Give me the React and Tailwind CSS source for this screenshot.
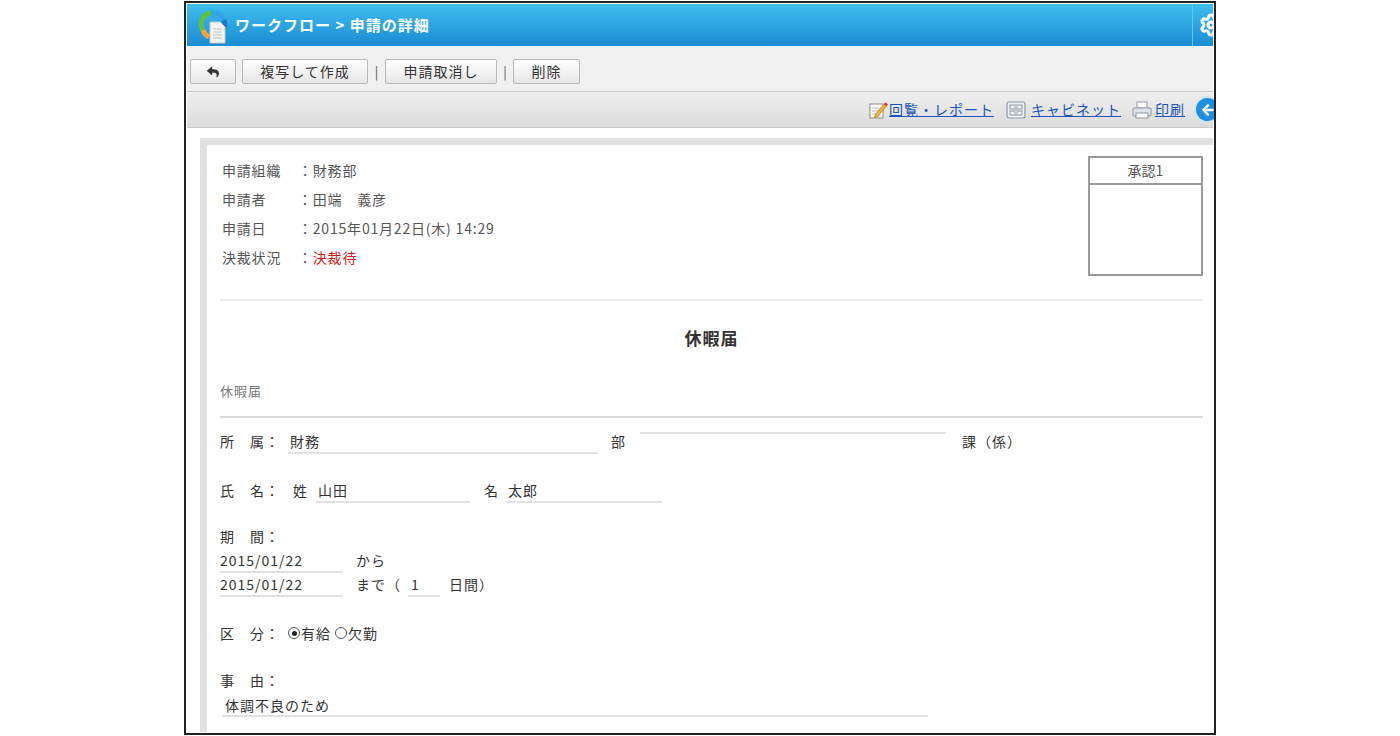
import React from 'react';
import { Settings, ArrowLeft } from 'lucide-react';
import { FaReply } from 'react-icons/fa';

const jp = { fontFamily: '"Noto Sans CJK JP", "Noto Sans", sans-serif' };

// workflow logo: colour ring with a sheet of paper in front
const Logo = () => (
  <svg width="32" height="36" viewBox="0 0 32 36">
    <path d="M6 22 A11 11 0 0 1 14 5" fill="none" stroke="#5cc23a" strokeWidth="5" />
    <path d="M14 5 A11 11 0 0 1 27 12" fill="none" stroke="#2fa6e8" strokeWidth="5" />
    <path d="M27 12 A11 11 0 0 1 27 20" fill="none" stroke="#1f78c8" strokeWidth="5" />
    <path d="M6 22 A11 11 0 0 0 12 29" fill="none" stroke="#f2a23a" strokeWidth="5" />
    <path d="M13 14 h10 l5 5 v16 h-15 z" fill="#f4f4f4" stroke="#c8c8c8" strokeWidth="1" />
    <path d="M16 21 h9 M16 24 h9 M16 27 h9 M16 30 h9" stroke="#c0c0c0" strokeWidth="1" />
  </svg>
);

const NoteIcon = () => (
  <svg width="20" height="20" viewBox="0 0 20 20">
    <rect x="2" y="4" width="13" height="14" fill="#fff" stroke="#8a8a8a" />
    <path d="M4 8 h8 M4 11 h8 M4 14 h6" stroke="#bbb" />
    <path d="M7 15 L16 4 L18.5 6 L9.5 17 L6.5 18 z" fill="#f0b030" stroke="#b07010" strokeWidth="0.6" />
    <path d="M16 4 L17.5 2.5 L20 4.5 L18.5 6 z" fill="#e03030" />
  </svg>
);

const CabinetIcon = () => (
  <svg width="22" height="20" viewBox="0 0 22 20">
    <rect x="2" y="2" width="18" height="16" rx="2" fill="#eef1f4" stroke="#8c97a3" strokeWidth="1.2" />
    <rect x="5" y="5" width="12" height="4" fill="none" stroke="#8c97a3" />
    <rect x="5" y="11" width="12" height="4" fill="none" stroke="#8c97a3" />
    <path d="M9 7 h4 M9 13 h4" stroke="#8c97a3" />
  </svg>
);

const PrintIcon = () => (
  <svg width="22" height="20" viewBox="0 0 22 20">
    <rect x="6" y="2" width="10" height="6" fill="#fff" stroke="#8c97a3" />
    <rect x="2" y="8" width="18" height="8" rx="1" fill="#dde2e8" stroke="#8c97a3" />
    <rect x="5" y="13" width="12" height="5" fill="#fff" stroke="#8c97a3" />
  </svg>
);

const ToolButton = ({ w, children }) => (
  <button
    type="button"
    className={`${w} h-[25px] flex items-center justify-center border border-[#b8b8b8] rounded-[2px] bg-gradient-to-b from-white to-[#e6e6e6] text-[14px] tracking-[1px] text-[#333]`}
  >
    {children}
  </button>
);

const Field = ({ w, children, className = '' }) => (
  <div className={`${w} border-b-2 border-[#e2e2e2] pb-[1px] leading-[20px] ${className}`}>{children}</div>
);

const Radio = ({ on }) => (
  <span className="inline-flex w-[12px] h-[12px] rounded-full border border-[#555] items-center justify-center mr-[1px]">
    {on && <span className="w-[5px] h-[5px] rounded-full bg-[#222]" />}
  </span>
);

export default function App() {
  return (
    <div className="w-[1400px] h-[736px] bg-white overflow-hidden" style={jp}>
      <div className="ml-[184px] mt-[1px] w-[1032px] h-[734px] border-2 border-[#222] p-[1px] overflow-hidden flex flex-col">
        {/* title bar */}
        <div className="h-[42px] shrink-0 flex items-center bg-gradient-to-b from-[#3fbdf0] to-[#1a8cd3]">
          <div className="ml-[10px] mt-[2px]">
            <Logo />
          </div>
          <div className="ml-[6px] text-white font-bold text-[15px] tracking-[1px]">ワークフロー &gt; 申請の詳細</div>
          <div className="ml-auto h-full flex items-center">
            <div className="w-px h-full bg-[#1878b8] border-r border-[#5fc8f2]" />
            <Settings className="ml-[6px] mr-[-10px] text-white" size={24} strokeWidth={3} />
          </div>
        </div>

        {/* action buttons */}
        <div className="h-[44px] shrink-0 mt-px bg-[#f0f0f0] flex items-start pt-[12px] pl-[3px] text-[#555]">
          <ToolButton w="w-[46px]">
            <FaReply size={12} color="#333" />
          </ToolButton>
          <div className="ml-[6px]">
            <ToolButton w="w-[126px]">複写して作成</ToolButton>
          </div>
          <span className="w-[17px] text-center leading-[25px] text-[13px]">|</span>
          <ToolButton w="w-[112px]">申請取消し</ToolButton>
          <span className="w-[16px] text-center leading-[25px] text-[13px]">|</span>
          <ToolButton w="w-[67px]">削除</ToolButton>
        </div>

        {/* link bar */}
        <div className="h-[37px] shrink-0 border-t border-b border-[#c9c9c9] bg-gradient-to-b from-[#efefef] to-[#dcdcdc] flex items-center justify-end text-[14px] tracking-[1px]">
          <NoteIcon />
          <a className="ml-[1px] text-[#1d55b8] underline">回覧・レポート</a>
          <span className="ml-[11px]">
            <CabinetIcon />
          </span>
          <a className="ml-[4px] text-[#1d55b8] underline">キャビネット</a>
          <span className="ml-[10px]">
            <PrintIcon />
          </span>
          <a className="ml-[2px] text-[#1d55b8] underline">印刷</a>
          <div className="ml-[9px] mr-[-8px] w-[27px] h-[27px] rounded-full bg-[#1e8fe0] border-2 border-[#cfe8f8] flex items-center justify-center">
            <ArrowLeft className="text-white" size={16} strokeWidth={3.5} />
          </div>
        </div>

        {/* document */}
        <div className="flex-1 min-h-0 pl-[13px] pt-[10px]">
          <div className="h-full border-l-[7px] border-t-[7px] border-[#e1e1e1] pl-[13px] pr-[10px] pt-[11px]">
            <div className="flex justify-between">
              <div className="pl-[2px] text-[14px] tracking-[0.8px] text-[#555]">
                <div className="flex h-[29px] items-center">
                  <span className="w-[76px]">申請組織</span>
                  <span>：財務部</span>
                </div>
                <div className="flex h-[29px] items-center">
                  <span className="w-[76px]">申請者</span>
                  <span>：田端　義彦</span>
                </div>
                <div className="flex h-[29px] items-center">
                  <span className="w-[76px]">申請日</span>
                  <span>：2015年01月22日(木) 14:29</span>
                </div>
                <div className="flex h-[29px] items-center">
                  <span className="w-[76px]">決裁状況</span>
                  <span>：<span className="text-[#d81818]">決裁待</span></span>
                </div>
              </div>
              <div className="w-[115px] h-[120px] border-2 border-[#9a9a9a] flex flex-col">
                <div className="h-[27px] border-b-2 border-[#9a9a9a] flex items-center justify-center text-[14px] text-[#555]">承認1</div>
              </div>
            </div>

            <div className="mt-[23px] h-[2px] bg-[#ececec]" />

            <div className="pt-[25px] text-center font-bold text-[17px] tracking-[1px] leading-[24px] text-[#333]">休暇届</div>
            <div className="mt-[31px] text-[13px] tracking-[1px] leading-[20px] text-[#777]">休暇届</div>
            <div className="mt-[15px] h-[2px] bg-[#dadada]" />

            <div className="text-[14px] tracking-[1px] text-[#333]">
              <div className="mt-[13px] flex items-start leading-[20px]">
                <span className="w-[68px]">所　属：</span>
                <Field w="w-[310px]" className="pl-[2px]">財務</Field>
                <span className="ml-[13px] w-[29px]">部</span>
                <Field w="w-[306px]" />
                <span className="ml-[16px]">課（係）</span>
              </div>

              <div className="mt-[26px] flex items-start leading-[20px]">
                <span className="w-[73px]">氏　名：</span>
                <span className="w-[23px]">姓</span>
                <Field w="w-[154px]" className="pl-[2px]">山田</Field>
                <span className="ml-[14px] w-[22px]">名</span>
                <Field w="w-[156px]" className="pl-[2px]">太郎</Field>
              </div>

              <div className="mt-[23px] leading-[20px]">期　間：</div>
              <div className="mt-[4px] flex items-start leading-[20px]">
                <Field w="w-[123px]">2015/01/22</Field>
                <span className="ml-[13px]">から</span>
              </div>
              <div className="mt-[1px] flex items-start leading-[20px]">
                <Field w="w-[123px]">2015/01/22</Field>
                <span className="ml-[13px] w-[52px]">まで（</span>
                <Field w="w-[32px]" className="pl-[3px]">1</Field>
                <span className="ml-[9px]">日間）</span>
              </div>

              <div className="mt-[26px] flex items-center leading-[20px]">
                <span className="w-[68px]">区　分：</span>
                <Radio on />
                <span>有給</span>
                <span className="ml-[4px]" />
                <Radio />
                <span>欠勤</span>
              </div>

              <div className="mt-[27px] leading-[20px]">事　由：</div>
              <div className="mt-[5px] ml-[2px] w-[706px] border-b-2 border-[#e2e2e2] pl-[3px] leading-[20px]">体調不良のため</div>
            </div>
          </div>
        </div>
      </div>
    </div>
  );
}
